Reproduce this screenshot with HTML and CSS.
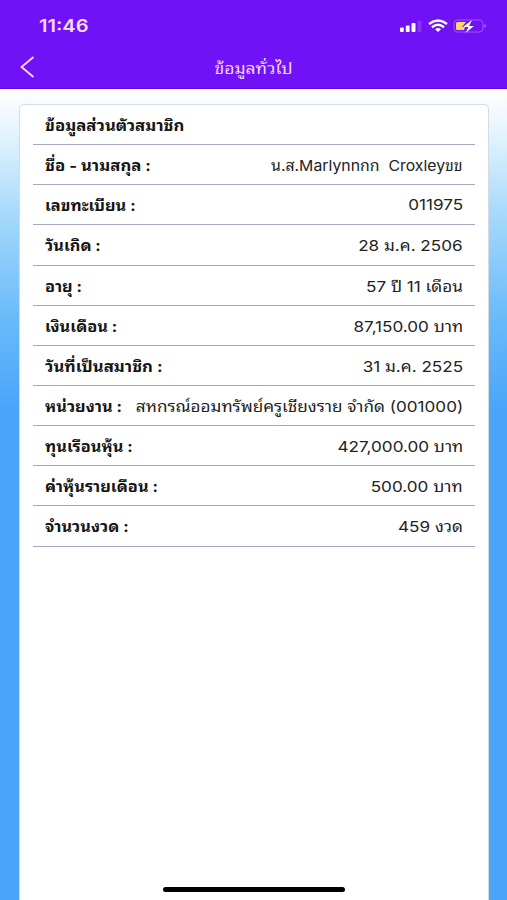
FILE: index.html
```html
<!DOCTYPE html>
<html lang="th">
<head>
<meta charset="utf-8">
<title>ข้อมูลทั่วไป</title>
<link rel="stylesheet" href="styles.css">
</head>
<body>
<header class="top">
  <div class="status">
    <span class="clock">11:46</span>
    <svg class="indicators" width="88" height="16" viewBox="0 0 88 16">
      <g fill="#fff"><rect x="1" y="9.500" width="3.800" height="4.500" rx="1"/><rect x="6.800" y="7.500" width="3.800" height="6.500" rx="1"/><rect x="12.500" y="5" width="4" height="9" rx="1"/><rect x="18.500" y="2.500" width="4" height="11.500" rx="1" opacity=".15"/></g>
      <g fill="none" stroke="#fff" stroke-width="2.400"><path d="M30 6Q39 -.8 48 6"/><path d="M33 9.200Q39 4.500 45 9.200"/></g><path fill="#fff" d="M36 11.200Q39 8.700 42 11.200L39 14Z"/>
      <rect x="55" y="2" width="29" height="12" rx="3.500" fill="none" stroke="#9a58f5"/><path d="M58.500 4H67l-4 5h3l-1 3h-6.500q-1.500 0-1.500-1.500v-5q0-1.500 1.500-1.500z" fill="#ffd36a"/><path d="M85.500 6v4q3-2 0-4" fill="#b07af8"/><path d="M73 2 64 9h5.500l-3 6L75 8h-5z" fill="#fff"/>
    </svg>
  </div>
  <nav class="nav">
    <svg class="back" width="16" height="22" viewBox="0 0 16 22"><path d="M13.500 1 1.500 11l12 10" fill="none" stroke="#f9dcff" stroke-width="1.800"/></svg>
    <h1>ข้อมูลทั่วไป</h1>
  </nav>
</header>
<main class="card">
  <h2 class="row"><span class="title">ข้อมูลส่วนตัวสมาชิก</span></h2>
  <dl>
    <div class="row"><dt class="wide">ชื่อ - นามสกุล :</dt><dd class="name">น.ส.Marlynnกก  Croxleyขข</dd></div>
    <div class="row"><dt>เลขทะเบียน :</dt><dd>011975</dd></div>
    <div class="row"><dt>วันเกิด :</dt><dd>28 ม.ค. 2506</dd></div>
    <div class="row"><dt>อายุ :</dt><dd>57 ปี 11 เดือน</dd></div>
    <div class="row"><dt>เงินเดือน :</dt><dd>87,150.00 บาท</dd></div>
    <div class="row"><dt class="wide">วันที่เป็นสมาชิก :</dt><dd>31 ม.ค. 2525</dd></div>
    <div class="row"><dt>หน่วยงาน :</dt><dd>สหกรณ์ออมทรัพย์ครูเชียงราย จำกัด (001000)</dd></div>
    <div class="row"><dt>ทุนเรือนหุ้น :</dt><dd>427,000.00 บาท</dd></div>
    <div class="row"><dt>ค่าหุ้นรายเดือน :</dt><dd>500.00 บาท</dd></div>
    <div class="row"><dt>จำนวนงวด :</dt><dd>459 งวด</dd></div>
  </dl>
</main>
<div class="home"></div>
</body>
</html>
```
FILE: styles.css
```css
* { box-sizing: border-box; margin: 0; }
body {
  height: 900px;
  overflow: hidden;
  display: flex;
  flex-direction: column;
  font-family: Inter, "Noto Sans Thai Looped", "Noto Looped Thai", Loma, Garuda, Waree, Umpush, Norasi, "Tlwg Typo", "Noto Sans Thai", sans-serif;
  color: #222;
  background: linear-gradient(#fff 89px, #e3f3fd 135px, #a9dafb 210px, #69baf9 320px, #4aa4fa 410px);
}
.top { height: 89px; flex: none; background: #7012f5; border-bottom: 1px solid #5e08d5; color: #fff; }
.status { height: 51px; padding: 0 20px 0 39px; display: flex; align-items: center; justify-content: space-between; }
.clock { font-size: 17px; font-weight: 600; color: #f9dcff; transform: scaleX(1.18); transform-origin: left; }
.nav { height: 32px; padding: 0 20px; display: grid; grid-template-columns: 16px 1fr 16px; align-items: center; }
h1 { font-size: 15px; font-weight: 400; text-align: center; color: #f3d5ff; transform: scaleX(1.17); }
.card { flex: 1; margin: 15px 18px 0 19px; padding: 0 13px; background: #fff; border: 1px solid #d5dbe3; border-bottom: 0; border-radius: 5px 5px 0 0; }
.row { height: 40.150px; padding: 0 12px 1px; border-bottom: 1px solid #aaa7bf; display: flex; align-items: center; justify-content: space-between; white-space: nowrap; font-size: 15px; }
.title, dt { font-weight: 700; color: #151515; transform: scaleX(1.09); transform-origin: left; }
.title, .wide { transform: scaleX(1.115); }
dd { transform: scaleX(1.14); transform-origin: right; }
.name { white-space: pre; transform: scaleX(1.055); }
.home { position: absolute; left: 163px; top: 887px; width: 182px; height: 5px; border-radius: 3px; background: #000; }
```
